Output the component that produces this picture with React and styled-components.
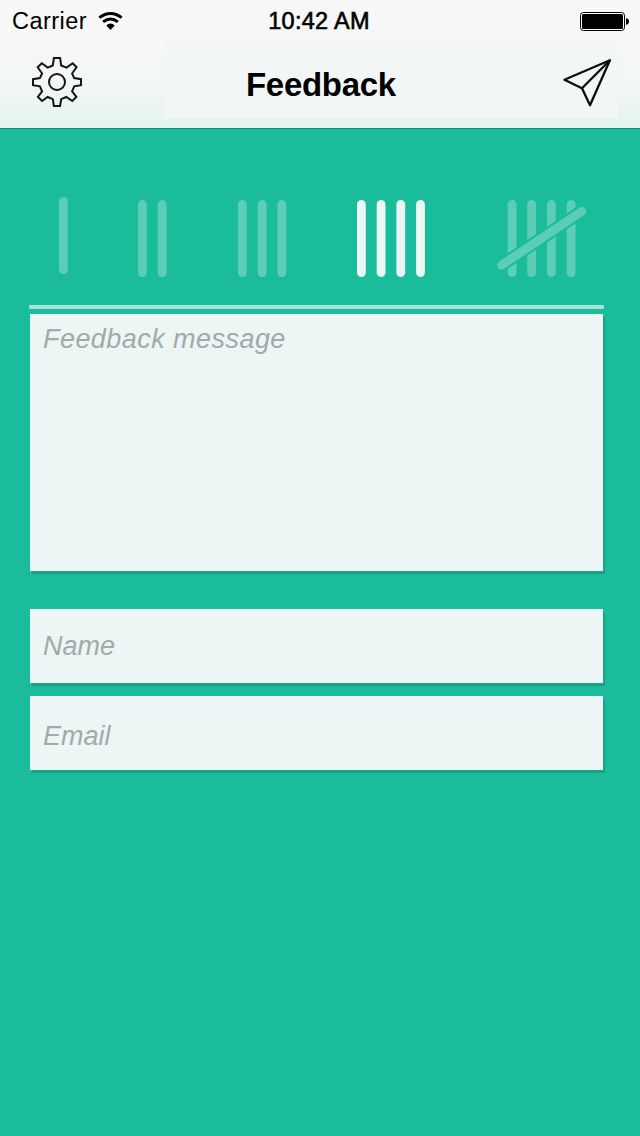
import React, { useState } from "react";
import styled, { createGlobalStyle, css } from "styled-components";

const GlobalStyle = createGlobalStyle`
  * { box-sizing: border-box; }
  body {
    margin: 0;
    background: #1bbc9b;
    font-family: "Liberation Sans", Arial, sans-serif;
  }
`;

const Screen = styled.div`
  width: 640px;
  height: 1136px;
  display: flex;
  flex-direction: column;
  background: #1bbc9b;
  overflow: hidden;
`;

const Header = styled.header`
  height: 129px;
  flex: none;
  background: linear-gradient(#f7f7f7 0, #f7f7f7 40px, #f3f7f6 80px, #e4f4f0 128px);
  border-bottom: 1px solid #148a72;
`;

const StatusBar = styled.div`
  height: 40px;
  display: grid;
  grid-template-columns: 1fr auto 1fr;
  align-items: center;
  padding: 2px 11px 0 9px;
  font-size: 23.5px;
  line-height: 38px;
  color: #000;
`;

const Carrier = styled.div`
  display: flex;
  align-items: center;
  gap: 11px;
  padding-left: 3px;
  letter-spacing: 0.45px;
`;

const Clock = styled.div`
  letter-spacing: 0.3px;
  -webkit-text-stroke: 0.6px #000;
`;

const BatteryIcon = styled.svg`
  justify-self: end;
`;

const NavBar = styled.div`
  height: 88px;
  display: flex;
  padding-right: 22px;
`;

const IconButton = styled.button`
  border: 0;
  padding: 0;
  background: none;
  display: block;
`;

const SettingsSlot = styled.div`
  width: 165px;
  padding: 16px 0 0 31px;
`;

const TitlePanel = styled.div`
  flex: 1;
  height: 78px;
  display: flex;
  justify-content: space-between;
  align-items: flex-start;
  padding: 17px 6px 0 81px;
  background: #f2f6f5;
`;

const Title = styled.h1`
  margin: 9px 0 0;
  font-size: 33px;
  line-height: 38px;
  font-weight: 700;
  letter-spacing: -0.3px;
  color: #000;
`;

const Ratings = styled.div`
  height: 176px;
  flex: none;
  display: flex;
  gap: 70px;
  padding: 71px 0 0 59px;
`;

const RatingButton = styled(IconButton)`
  height: 78px;
  margin-top: ${(p) => (p.$raised ? "-3px" : "0")};
  color: #ecf6f5;
  opacity: ${(p) => (p.$selected ? 1 : 0.31)};
  svg { display: block; }
`;

const Form = styled.form`
  width: 573px;
  margin-left: 30px;
  display: flex;
  flex-direction: column;
`;

const Divider = styled.div`
  height: 4px;
  margin: 0 -1px 5px;
  border-radius: 1px;
  background: #a9e2d6;
`;

const fieldStyle = css`
  display: block;
  width: 100%;
  border: 0;
  border-radius: 0;
  outline: 0;
  resize: none;
  overflow: hidden;
  background: #ecf6f5;
  box-shadow: 2px 3px 0 #1aa286;
  color: #333;
  font: italic 27px/32px "Liberation Sans", Arial, sans-serif;
  &::placeholder { color: #a3aaa9; opacity: 1; }
`;

const Message = styled.textarea`
  ${fieldStyle}
  height: 257px;
  padding: 9px 13px;
  letter-spacing: 0.45px;
`;

const Field = styled.input`
  ${fieldStyle}
  height: 74px;
  margin-top: ${(p) => p.$gap}px;
  padding: ${(p) => p.$drop}px 13px 0;
`;

function Tally({ count, width }) {
  return (
    <svg width={width} height="78" viewBox={`0 0 ${width} 78`} fill="currentColor">
      {Array.from({ length: count }, (_, i) => (
        <rect key={i} x={i * 19.7} y="0" width="8.8" height="77" rx="4.4" />
      ))}
    </svg>
  );
}

function CrossedTally() {
  return (
    <svg width="90" height="78" viewBox="0 0 90 78">
      <mask id="cross" maskUnits="userSpaceOnUse" x="0" y="0" width="90" height="78">
        <rect width="90" height="78" fill="#fff" />
        <line x1="-8" y1="73.5" x2="98" y2="2.5" stroke="#000" strokeWidth="13" />
      </mask>
      <g fill="currentColor" mask="url(#cross)">
        {[10.7, 30.2, 50, 69.7].map((x) => (
          <rect key={x} x={x} y="0" width="8.8" height="77" rx="4.4" />
        ))}
      </g>
      <line x1="4.6" y1="65.2" x2="84.8" y2="11.4" stroke="currentColor" strokeWidth="8.8" strokeLinecap="round" />
    </svg>
  );
}

const WIDTHS = [9, 30, 49, 70];

export default function App() {
  const [rating, setRating] = useState(4);
  return (
    <>
      <GlobalStyle />
      <Screen>
        <Header>
          <StatusBar>
            <Carrier>
              <span>Carrier</span>
              <svg width="25" height="19" viewBox="0 0 25 19" fill="none" stroke="#000" strokeWidth="2.9">
                <path d="M1.3 5.7Q12.5-2.6 23.7 5.7" />
                <path d="M5.1 9.9Q12.5 4.2 19.9 9.9" />
                <path d="M8.3 13.4Q12.5 9.8 16.7 13.4L12.5 17.9Z" fill="#000" stroke="none" />
              </svg>
            </Carrier>
            <Clock>10:42 AM</Clock>
            <BatteryIcon width="49" height="19" viewBox="0 0 49 19">
              <rect x="0.5" y="0.5" width="44" height="18" rx="3" fill="#fff" stroke="#000" />
              <rect x="2" y="2" width="41" height="15" rx="1.5" />
              <path d="M46 6.2Q49 6.6 49 9.5T46 12.8Z" />
            </BatteryIcon>
          </StatusBar>
          <NavBar>
            <SettingsSlot>
              <IconButton aria-label="Settings">
                <svg width="52" height="52" viewBox="0 0 52 52" fill="none" stroke="#151717" strokeWidth="2">
                  <path d="M22.9 2H29.1L30.2 9.5L35.5 11.6L41.7 7.3L45.6 11.2L41.1 17.5L43.2 22.1L50 23.2V29.2L43.2 30.3L41.1 35.3L45.4 40.9L41.3 45L35.3 41L30.2 43.1L29.1 50H22.9L21.8 43.1L16.7 41L11 45L6.9 40.9L11.1 35.3L8.9 30.3L2 29.2V23.2L8.9 22.1L11.1 17.5L6.7 11.2L10.8 7.3L16.7 11.6L21.8 9.5Z" />
                  <circle cx="26" cy="26" r="8" />
                </svg>
              </IconButton>
            </SettingsSlot>
            <TitlePanel>
              <Title>Feedback</Title>
              <IconButton aria-label="Send">
                <svg width="50" height="52" viewBox="0 0 50 52" fill="none" stroke="#0c0d0d" strokeWidth="2.3">
                  <path d="M2.4 22.8L47.9 3.2L28 48.3L20 31.2Z" strokeLinejoin="round" />
                  <path d="M20 31.2L47.9 3.2" />
                </svg>
              </IconButton>
            </TitlePanel>
          </NavBar>
        </Header>
        <Ratings>
          {WIDTHS.map((width, i) => (
            <RatingButton
              key={width}
              aria-label={`Rate ${i + 1}`}
              $raised={i === 0}
              $selected={rating === i + 1}
              onClick={() => setRating(i + 1)}
            >
              <Tally count={i + 1} width={width} />
            </RatingButton>
          ))}
          <RatingButton aria-label="Rate 5" $selected={rating === 5} onClick={() => setRating(5)}>
            <CrossedTally />
          </RatingButton>
        </Ratings>
        <Form>
          <Divider />
          <Message placeholder="Feedback message" />
          <Field placeholder="Name" $gap={38} $drop={0} />
          <Field placeholder="Email" $gap={13} $drop={7} />
        </Form>
      </Screen>
    </>
  );
}
